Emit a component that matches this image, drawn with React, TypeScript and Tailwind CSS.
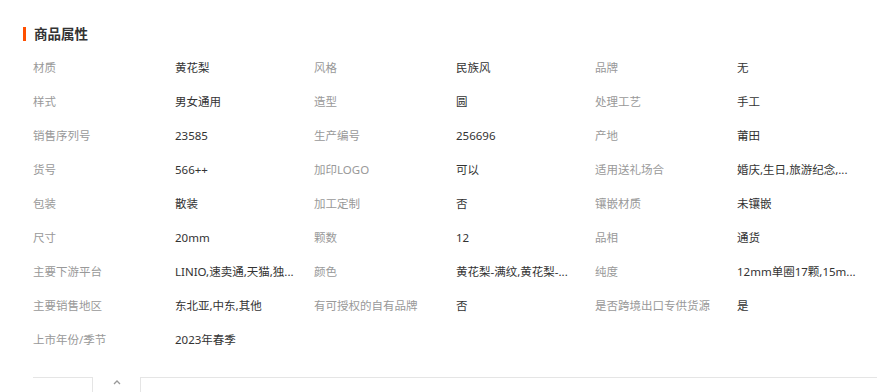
const rows: [string, string, string, string, string, string][] = [
  ['材质', '黄花梨', '风格', '民族风', '品牌', '无'],
  ['样式', '男女通用', '造型', '圆', '处理工艺', '手工'],
  ['销售序列号', '23585', '生产编号', '256696', '产地', '莆田'],
  ['货号', '566++', '加印LOGO', '可以', '适用送礼场合', '婚庆,生日,旅游纪念,...'],
  ['包装', '散装', '加工定制', '否', '镶嵌材质', '未镶嵌'],
  ['尺寸', '20mm', '颗数', '12', '品相', '通货'],
  ['主要下游平台', 'LINIO,速卖通,天猫,独...', '颜色', '黄花梨-满纹,黄花梨-...', '纯度', '12mm单圈17颗,15m...'],
  ['主要销售地区', '东北亚,中东,其他', '有可授权的自有品牌', '否', '是否跨境出口专供货源', '是'],
];

function Cell({ label, value }: { label: string; value: string }) {
  return (
    <div className="flex items-center h-[34px]">
      <div className="w-[142px] text-[#999] whitespace-nowrap">{label}</div>
      <div className="w-[139px] text-[#333] whitespace-nowrap">{value}</div>
    </div>
  );
}

export default function App() {
  return (
    <div
      className="w-[886px] h-[392px] bg-white overflow-hidden text-[11.5px] leading-[16px]"
      style={{ fontFamily: '"Noto Sans", "Noto Sans CJK SC", sans-serif' }}
    >
      <div className="flex items-center pt-[27px] pl-[23px] h-[41px]">
        <div className="w-[3px] h-[14px] bg-[#ff5000]" />
        <h2 className="ml-[8px] text-[13.5px] font-bold text-[#333] leading-[14px]">商品属性</h2>
      </div>
      <div className="pl-[33px] pt-[10px]">
        {rows.map((r) => (
          <div key={r[0]} className="flex">
            <Cell label={r[0]} value={r[1]} />
            <Cell label={r[2]} value={r[3]} />
            <Cell label={r[4]} value={r[5]} />
          </div>
        ))}
        <div className="flex">
          <Cell label="上市年份/季节" value="2023年春季" />
        </div>
      </div>
      <div className="flex mt-[20px] pl-[33px] pr-[9px] h-[20px]">
        <div className="w-[59px] border-t border-[#e5e5e5]" />
        <div className="w-[49px] border-x border-[#e5e5e5] flex justify-center pt-[1px]">
          <svg width="10" height="8" viewBox="0 0 10 8" fill="none" stroke="#999" strokeWidth="1.3">
            <path d="M2 6 L5 3 L8 6" />
          </svg>
        </div>
        <div className="flex-1 border-t border-[#e5e5e5]" />
      </div>
    </div>
  );
}
